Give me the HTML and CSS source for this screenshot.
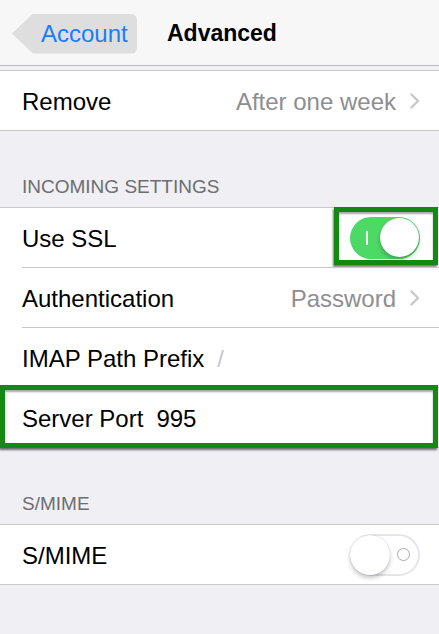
FILE: index.html
```html
<!DOCTYPE html>
<html>
<head>
<meta charset="utf-8">
<link rel="stylesheet" href="styles.css">
</head>
<body>
<div class="screen">
  <header class="nav">
    <div class="back"><span class="back-label">Account</span></div>
    <div class="nav-title">Advanced</div>
  </header>
  <div class="nav-gap"></div>

  <ul class="group group-first">
    <li class="row">
      <div class="cell">
        <span class="label">Remove</span>
        <span class="value">After one week</span>
        <svg class="chev" width="10" height="16" viewBox="0 0 10 16"><polyline points="1.5,1.5 8,8 1.5,14.5" fill="none" stroke="#c7c7cc" stroke-width="2.4" stroke-linecap="round" stroke-linejoin="round"/></svg>
      </div>
    </li>
  </ul>

  <div class="section-header">INCOMING SETTINGS</div>
  <ul class="group">
    <li class="row">
      <div class="cell">
        <span class="label">Use SSL</span>
        <span class="toggle toggle-on"><span class="on-mark"></span><span class="knob"></span></span>
        <span class="highlight highlight-toggle"></span>
      </div>
    </li>
    <li class="row">
      <div class="cell">
        <span class="label">Authentication</span>
        <span class="value">Password</span>
        <svg class="chev" width="10" height="16" viewBox="0 0 10 16"><polyline points="1.5,1.5 8,8 1.5,14.5" fill="none" stroke="#c7c7cc" stroke-width="2.4" stroke-linecap="round" stroke-linejoin="round"/></svg>
      </div>
    </li>
    <li class="row">
      <div class="cell">
        <span class="label">IMAP Path Prefix</span>
        <span class="field field-placeholder">/</span>
      </div>
    </li>
    <li class="row row-highlighted">
      <div class="cell">
        <span class="label">Server Port</span>
        <span class="field">995</span>
      </div>
      <span class="highlight highlight-row"></span>
    </li>
  </ul>

  <div class="section-header">S/MIME</div>
  <ul class="group">
    <li class="row">
      <div class="cell">
        <span class="label">S/MIME</span>
        <span class="toggle toggle-off"><span class="knob"></span><span class="off-mark"></span></span>
      </div>
    </li>
  </ul>
</div>
</body>
</html>
```

FILE: styles.css
```css
* { box-sizing: border-box; }
html, body {
  margin: 0;
  padding: 0;
  background: #efeff4;
}
body {
  font-family: "Liberation Sans", Arial, sans-serif;
  color: #000;
  width: 439px;
  height: 634px;
  overflow: hidden;
}
.screen {
  display: flex;
  flex-direction: column;
}
.nav {
  height: 66px;
  background: #f7f7f8;
  border-bottom: 1px solid #b9b9bd;
  display: flex;
  align-items: center;
  padding-left: 12px;
}
.back {
  width: 125px;
  height: 40px;
  margin-top: 2px;
  background: #dedede;
  border-radius: 0 6px 6px 0;
  clip-path: polygon(0 50%, 21px 0, 100% 0, 100% 100%, 21px 100%);
  display: flex;
  align-items: center;
  padding-left: 29px;
}
.back-label {
  font-size: 24px;
  color: #167efb;
}
.nav-title {
  margin-left: 30px;
  margin-top: 2px;
  font-size: 23px;
  font-weight: bold;
}
.nav-gap {
  height: 4px;
  background: #f3f3f5;
}
.group {
  list-style: none;
  margin: 0;
  padding: 0;
  background: #fff;
  border-top: 1px solid #c8c7cc;
  border-bottom: 1px solid #c8c7cc;
}
.row {
  position: relative;
  padding-left: 22px;
}
.row + .row .cell {
  border-top: 1px solid #c8c7cc;
}
.group .row:first-child .cell { height: 59px; }
.cell {
  position: relative;
  height: 60px;
  display: flex;
  align-items: center;
  padding-top: 2px;
  padding-right: 19px;
  font-size: 24px;
}
.label {
  white-space: nowrap;
}
.value {
  margin-left: auto;
  color: #8e8e93;
}
.chev {
  margin-left: 14px;
  margin-top: -1px;
}
.field {
  margin-left: 13px;
}
.field-placeholder {
  color: #c7c7cc;
}
.section-header {
  height: 76px;
  display: flex;
  align-items: flex-end;
  padding: 0 0 11px 22px;
  font-size: 19px;
  line-height: 19px;
  color: #6d6d72;
}
.toggle {
  margin-left: auto;
  margin-top: -2px;
  position: relative;
  width: 70px;
  height: 42px;
  border-radius: 21px;
  display: flex;
  align-items: center;
}
.toggle-on {
  background: #4cd964;
  justify-content: flex-end;
  padding-right: 1px;
}
.toggle-off {
  background: #fff;
  border: 2px solid #e5e5ea;
  padding-left: 0;
}
.knob {
  width: 39px;
  height: 39px;
  border-radius: 50%;
  background: #fff;
  box-shadow: 0 3px 4px rgba(0,0,0,0.22), 0 0 1px rgba(0,0,0,0.25);
}
.toggle-off .knob {
  width: 40px;
  height: 40px;
  margin-left: -2px;
}
.on-mark {
  width: 2px;
  height: 14px;
  background: #fff;
  margin-right: 12px;
  opacity: 0.95;
}
.off-mark {
  width: 13px;
  height: 13px;
  border-radius: 50%;
  border: 1.5px solid #a9a9ae;
  margin-left: 7px;
}
.highlight {
  position: absolute;
  border: 5px solid #128a12;
  box-shadow: -1px 2px 2px rgba(0,0,0,0.55), inset 0 2px 2px rgba(0,0,0,0.35);
  pointer-events: none;
}
.highlight-toggle {
  right: 1px;
  top: -1px;
  width: 104px;
  height: 58px;
}
.highlight-row {
  left: 0;
  right: 1px;
  top: -2px;
  bottom: -1px;
}
```
